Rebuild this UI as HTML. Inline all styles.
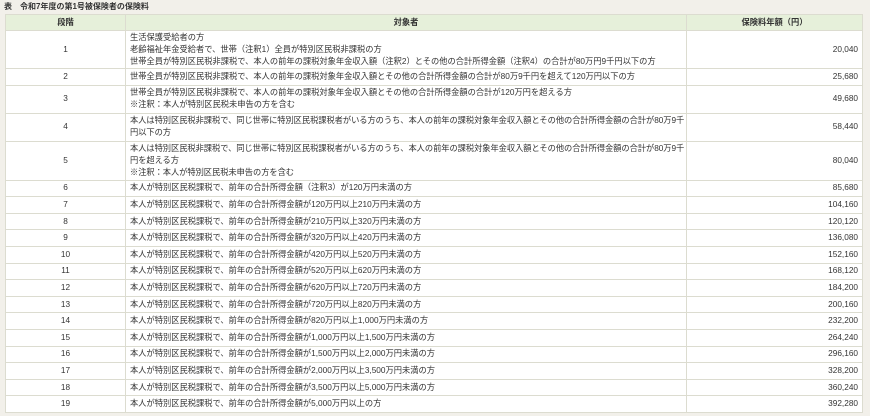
<!DOCTYPE html>
<html><head><meta charset="utf-8"><style>
body{margin:0;background:#f2f0ea;width:870px;height:416px;overflow:hidden;font-family:"Liberation Sans","Noto Sans CJK JP",sans-serif;color:#333;}
.cap{position:absolute;left:4px;top:2px;font-size:8px;font-weight:bold;line-height:10px;}
table{position:absolute;left:5px;top:14px;width:857px;border-collapse:collapse;background:#fff;font-size:8.25px;table-layout:fixed;}
td,th{border:1px solid #dcdcd0;padding:0 4px;line-height:12px;vertical-align:middle;white-space:nowrap;overflow:hidden;}
th{background:#e6f0da;font-weight:bold;height:15px;}
td.n{text-align:center;}
td.v{text-align:right;}
tr.s td{height:15.6px;}
</style></head><body>
<div class="cap">表　令和7年度の第1号被保険者の保険料</div>
<table>
<colgroup><col style="width:120px"><col style="width:561px"><col style="width:176px"></colgroup>
<tr><th>段階</th><th>対象者</th><th>保険料年額（円）</th></tr>
<tr><td class="n" style="height:37px">1</td><td>生活保護受給者の方<br>老齢福祉年金受給者で、世帯（注釈1）全員が特別区民税非課税の方<br>世帯全員が特別区民税非課税で、本人の前年の課税対象年金収入額（注釈2）とその他の合計所得金額（注釈4）の合計が80万円9千円以下の方</td><td class="v">20,040</td></tr>
<tr class="s"><td class="n">2</td><td>世帯全員が特別区民税非課税で、本人の前年の課税対象年金収入額とその他の合計所得金額の合計が80万9千円を超えて120万円以下の方</td><td class="v">25,680</td></tr>
<tr><td class="n" style="height:27px">3</td><td>世帯全員が特別区民税非課税で、本人の前年の課税対象年金収入額とその他の合計所得金額の合計が120万円を超える方<br>※注釈：本人が特別区民税未申告の方を含む</td><td class="v">49,680</td></tr>
<tr><td class="n" style="height:27px">4</td><td style="letter-spacing:-0.05px">本人は特別区民税非課税で、同じ世帯に特別区民税課税者がいる方のうち、本人の前年の課税対象年金収入額とその他の合計所得金額の合計が80万9千<br>円以下の方</td><td class="v">58,440</td></tr>
<tr><td class="n" style="height:38px">5</td><td style="letter-spacing:-0.05px">本人は特別区民税非課税で、同じ世帯に特別区民税課税者がいる方のうち、本人の前年の課税対象年金収入額とその他の合計所得金額の合計が80万9千<br>円を超える方<br>※注釈：本人が特別区民税未申告の方を含む</td><td class="v">80,040</td></tr>
<tr class="s"><td class="n">6</td><td>本人が特別区民税課税で、前年の合計所得金額（注釈3）が120万円未満の方</td><td class="v">85,680</td></tr>
<tr class="s"><td class="n">7</td><td>本人が特別区民税課税で、前年の合計所得金額が120万円以上210万円未満の方</td><td class="v">104,160</td></tr>
<tr class="s"><td class="n">8</td><td>本人が特別区民税課税で、前年の合計所得金額が210万円以上320万円未満の方</td><td class="v">120,120</td></tr>
<tr class="s"><td class="n">9</td><td>本人が特別区民税課税で、前年の合計所得金額が320万円以上420万円未満の方</td><td class="v">136,080</td></tr>
<tr class="s"><td class="n">10</td><td>本人が特別区民税課税で、前年の合計所得金額が420万円以上520万円未満の方</td><td class="v">152,160</td></tr>
<tr class="s"><td class="n">11</td><td>本人が特別区民税課税で、前年の合計所得金額が520万円以上620万円未満の方</td><td class="v">168,120</td></tr>
<tr class="s"><td class="n">12</td><td>本人が特別区民税課税で、前年の合計所得金額が620万円以上720万円未満の方</td><td class="v">184,200</td></tr>
<tr class="s"><td class="n">13</td><td>本人が特別区民税課税で、前年の合計所得金額が720万円以上820万円未満の方</td><td class="v">200,160</td></tr>
<tr class="s"><td class="n">14</td><td>本人が特別区民税課税で、前年の合計所得金額が820万円以上1,000万円未満の方</td><td class="v">232,200</td></tr>
<tr class="s"><td class="n">15</td><td>本人が特別区民税課税で、前年の合計所得金額が1,000万円以上1,500万円未満の方</td><td class="v">264,240</td></tr>
<tr class="s"><td class="n">16</td><td>本人が特別区民税課税で、前年の合計所得金額が1,500万円以上2,000万円未満の方</td><td class="v">296,160</td></tr>
<tr class="s"><td class="n">17</td><td>本人が特別区民税課税で、前年の合計所得金額が2,000万円以上3,500万円未満の方</td><td class="v">328,200</td></tr>
<tr class="s"><td class="n">18</td><td>本人が特別区民税課税で、前年の合計所得金額が3,500万円以上5,000万円未満の方</td><td class="v">360,240</td></tr>
<tr class="s"><td class="n">19</td><td>本人が特別区民税課税で、前年の合計所得金額が5,000万円以上の方</td><td class="v">392,280</td></tr>
</table>
</body></html>
